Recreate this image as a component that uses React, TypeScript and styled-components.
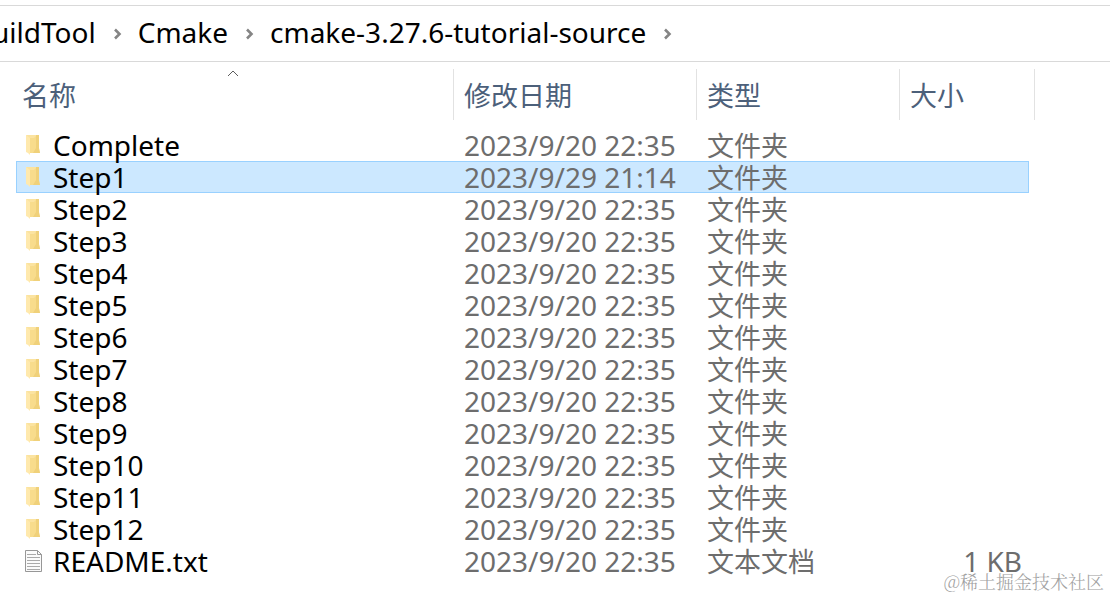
import React from "react";
import styled, { createGlobalStyle } from "styled-components";

const latin = `"Noto Sans", "Noto Sans CJK SC", sans-serif`;
const cjk = `"Noto Sans CJK SC", sans-serif`;

const GlobalStyle = createGlobalStyle`
  *, *::before, *::after { box-sizing: border-box; }
  body { margin: 0; background: #fff; color: #000; font-family: ${latin}; }
`;

const Window = styled.div`
  padding-top: 5px;
  min-height: 100vh;
  position: relative;
  overflow: hidden;
`;

const AddressBar = styled.nav`
  display: flex;
  align-items: center;
  height: 57px;
  padding-bottom: 3px;
  border-top: 1px solid #d9d9d9;
  border-bottom: 1px solid #d9d9d9;
  overflow: hidden;
`;

const Crumbs = styled.ol`
  display: flex;
  align-items: center;
  list-style: none;
  margin: 0 0 0 -8px;
  padding: 0;
`;

const Crumb = styled.li`
  display: flex;
  align-items: center;
`;

const CrumbLink = styled.a`
  color: #000;
  font-size: 28px;
  line-height: 40px;
  white-space: nowrap;
  text-decoration: none;
`;

const Chevron = styled.svg`
  width: 10px;
  height: 12px;
  margin: 4px 15px 0 17px;
`;

const FileTable = styled.table`
  width: 1019px;
  margin: 7px 0 0 16px;
  table-layout: fixed;
  border-collapse: separate;
  border-spacing: 0;
`;

const HeadCell = styled.th<{ $width: number; $pad?: number; $line?: boolean }>`
  position: relative;
  width: ${(p) => p.$width}px;
  height: 51px;
  padding: 0 0 0 ${(p) => p.$pad ?? 10}px;
  border-right: ${(p) => (p.$line ? "1px solid #e2e2e2" : "0")};
  text-align: left;
  vertical-align: middle;
`;

const HeadButton = styled.button`
  display: block;
  padding: 0;
  border: 0;
  background: none;
  color: #4c607a;
  font-family: ${cjk};
  font-size: 27px;
  line-height: 40px;
  white-space: nowrap;
`;

const SortArrow = styled.svg`
  position: absolute;
  top: 1px;
  left: 50%;
  width: 12px;
  height: 7px;
  margin-left: -8px;
`;

const Body = styled.tbody`
  &::before {
    content: "";
    display: block;
    height: 9px;
  }
`;

const Row = styled.tr<{ $selected: boolean }>`
  --line: ${(p) => (p.$selected ? "#99d1ff" : "transparent")};

  td {
    background: ${(p) => (p.$selected ? "#cce8ff" : "transparent")};
    border-top: 1px solid var(--line);
    border-bottom: 1px solid var(--line);
  }
  td:first-child {
    border-left: 1px solid var(--line);
  }
  td:last-child {
    border-right: 1px solid var(--line);
  }
`;

const Cell = styled.td<{ $cjk?: boolean; $right?: boolean }>`
  height: 32px;
  padding: 0 ${(p) => (p.$right ? 6 : 0)}px 0 10px;
  color: #6d6d6d;
  font-family: ${(p) => (p.$cjk ? cjk : latin)};
  font-size: ${(p) => (p.$cjk ? 27 : 28)}px;
  line-height: 30px;
  text-align: ${(p) => (p.$right ? "right" : "left")};
  white-space: nowrap;
`;

const NameCell = styled(Cell)`
  padding-left: 7px;
  color: #000;
`;

const FileName = styled.div`
  display: flex;
  align-items: center;
  gap: 10px;
  height: 30px;
`;

const FileIcon = styled.svg`
  flex: none;
  width: 19px;
  height: 24px;
`;

const Watermark = styled.div`
  position: absolute;
  right: 6px;
  bottom: 4px;
  color: #a0a0a0;
  font-family: "Noto Serif CJK SC", "Noto Sans CJK SC", serif;
  font-weight: 300;
  font-size: 18px;
  line-height: 24px;
`;

function FolderIcon() {
  return (
    <FileIcon viewBox="0 0 19 24" aria-hidden="true">
      <path d="M2 2h13v14l1 4H6z" fill="#fbe3a0" />
      <path d="M12 2h3v13l1 5H8l4-6z" fill="#f0d17a" />
      <path d="M6 5h4l2-2v12l-3 5H6z" fill="#f8dc8c" />
      <path d="M2 2l4 3v17l-2-2-2-1z" fill="#ffe9ad" />
    </FileIcon>
  );
}

function TextIcon() {
  return (
    <FileIcon viewBox="0 0 19 24" aria-hidden="true">
      <path d="M1.500 1.500h12l4 4v17h-16z" fill="#fafafa" stroke="#979797" />
      <path d="M13.500 1.500v4h4" fill="none" stroke="#979797" />
      <path d="M3 5.500h9M3 8.500h13M3 11.500h13M3 14.500h13M3 17.500h13M3 20.500h13" stroke="#a9a9a9" />
    </FileIcon>
  );
}

const crumbs = ["uildTool", "Cmake", "cmake-3.27.6-tutorial-source"];

type Entry = { name: string; date: string; type: string; size?: string };

const folder = (name: string, date = "2023/9/20 22:35"): Entry => ({ name, date, type: "文件夹" });

const entries: Entry[] = [
  folder("Complete"),
  folder("Step1", "2023/9/29 21:14"),
  ...Array.from({ length: 11 }, (_, i) => folder(`Step${i + 2}`)),
  { name: "README.txt", date: "2023/9/20 22:35", type: "文本文档", size: "1 KB" },
];

export default function App() {
  return (
    <Window>
      <GlobalStyle />
      <AddressBar>
        <Crumbs>
          {crumbs.map((name) => (
            <Crumb key={name}>
              <CrumbLink href="#">{name}</CrumbLink>
              <Chevron viewBox="0 0 10 12" aria-hidden="true">
                <path d="M2 1.500L6.500 6L2 10.500" fill="none" stroke="#858585" strokeWidth="2.600" />
              </Chevron>
            </Crumb>
          ))}
        </Crumbs>
      </AddressBar>
      <FileTable>
        <thead>
          <tr>
            <HeadCell $width={438} $pad={6} $line aria-sort="ascending">
              <HeadButton>名称</HeadButton>
              <SortArrow viewBox="0 0 12 7" aria-hidden="true">
                <path d="M1 6L6 1L11 6" fill="none" stroke="#5c5c5c" />
              </SortArrow>
            </HeadCell>
            <HeadCell $width={243} $line>
              <HeadButton>修改日期</HeadButton>
            </HeadCell>
            <HeadCell $width={203} $line>
              <HeadButton>类型</HeadButton>
            </HeadCell>
            <HeadCell $width={129}>
              <HeadButton>大小</HeadButton>
            </HeadCell>
            <HeadCell as="td" $width={6} $pad={0} $line />
          </tr>
        </thead>
        <Body>
          {entries.map((e, i) => (
            <Row key={e.name} $selected={i === 1} aria-selected={i === 1}>
              <NameCell>
                <FileName>
                  {e.size ? <TextIcon /> : <FolderIcon />}
                  {e.name}
                </FileName>
              </NameCell>
              <Cell>{e.date}</Cell>
              <Cell $cjk>{e.type}</Cell>
              <Cell $right>{e.size}</Cell>
            </Row>
          ))}
        </Body>
      </FileTable>
      <Watermark>@稀土掘金技术社区</Watermark>
    </Window>
  );
}
